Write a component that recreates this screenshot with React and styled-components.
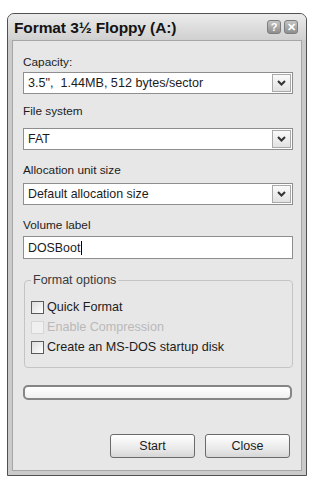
import React from 'react'
import styled, { createGlobalStyle } from 'styled-components'

const GlobalStyle = createGlobalStyle`
  html, body {
    margin: 0;
    padding: 0;
    background: #ffffff;
    font-family: "Liberation Sans", Arial, sans-serif;
    color: #1c1c1c;
  }
`

const Window = styled.div`
  box-sizing: border-box;
  width: 300px;
  margin: 13px 0 0 7px;
  border: 1px solid #505050;
  border-radius: 7px 7px 0 0;
  background: #cacaca;
  overflow: hidden;
`

const TitleBar = styled.div`
  height: 26px;
  display: flex;
  align-items: center;
  padding: 0 8px 0 6px;
  background: linear-gradient(#ebebeb, #d0d0d0);
`

const Title = styled.div`
  flex: 1;
  font-size: 15.5px;
  font-weight: bold;
  color: #141414;
  letter-spacing: -0.1px;
  padding-top: 1px;
`

const CaptionButtons = styled.div`
  display: flex;
  gap: 3px;
`

const CaptionButton = styled.div`
  width: 14px;
  height: 14px;
  box-sizing: border-box;
  border: 1px solid #7d7d7d;
  border-radius: 3px;
  background: linear-gradient(#c4c4c4, #8e8e8e);
  color: #ffffff;
  font-size: 11px;
  font-weight: bold;
  line-height: 12px;
  text-align: center;
`

const Client = styled.div`
  margin: 0 4px 4px 4px;
  border: 1px solid #a6a6a6;
  background: #e7e7e7;
  padding: 14px 8px 12px 10px;
  display: flex;
  flex-direction: column;
`

const Label = styled.div`
  font-size: 11.8px;
  line-height: 15px;
  height: 15px;
  margin-top: ${p => p.$top || 0}px;
`

const Combo = styled.div`
  box-sizing: border-box;
  height: 22px;
  margin-top: ${p => p.$top || 0}px;
  border: 1px solid #8e8e8e;
  background: #ffffff;
  display: flex;
  align-items: center;
  padding: 1px;
`

const ComboText = styled.div`
  flex: 1;
  padding-left: 3px;
  font-size: ${p => p.$size || 12.4}px;
  white-space: pre;
`

const ArrowButton = styled.div`
  box-sizing: border-box;
  width: 19px;
  height: 18px;
  border: 1px solid #a9a9a9;
  background: linear-gradient(#fafafa, #e2e2e2);
  display: flex;
  align-items: center;
  justify-content: center;
`

const TextInput = styled.div`
  box-sizing: border-box;
  height: 23px;
  margin-top: 3px;
  border: 1px solid #8e8e8e;
  background: #ffffff;
  display: flex;
  align-items: center;
  padding-left: 4px;
  font-size: 12.4px;
`

const Caret = styled.span`
  display: inline-block;
  width: 0;
  height: 14px;
  border-left: 1px solid #000;
  margin-left: 1px;
`

const Group = styled.fieldset`
  margin: 14px 0 0 1px;
  padding: 9px 6px 10px 6px;
  border: 1px solid #c4c4c4;
  border-radius: 4px;
  min-width: 0;
`

const Legend = styled.legend`
  padding: 0 2px;
  font-size: 12.5px;
  line-height: 15px;
  color: #3a3a3a;
`

const CheckRow = styled.div`
  height: 20px;
  display: flex;
  align-items: center;
  gap: 3px;
  font-size: 12.6px;
  color: ${p => (p.$disabled ? '#b9b9b9' : '#1c1c1c')};
`

const Box = styled.span`
  box-sizing: border-box;
  width: 13px;
  height: 13px;
  border: 1px solid ${p => (p.$disabled ? '#d6d6d6' : '#5a5a5a')};
  background: ${p => (p.$disabled ? '#f0f0f0' : 'linear-gradient(135deg, #dcdcdc, #ffffff)')};
`

const Progress = styled.div`
  box-sizing: border-box;
  height: 15px;
  margin: 17px 1px 0 0;
  border: 2px solid #858585;
  border-radius: 5px;
  background: linear-gradient(#ffffff, #f0f0f0);
`

const ButtonRow = styled.div`
  display: flex;
  justify-content: flex-end;
  gap: 10px;
  margin-top: 34px;
  padding-right: 3px;
`

const Button = styled.div`
  box-sizing: border-box;
  width: 85px;
  height: 24px;
  border: 1px solid #6a6a6a;
  border-radius: 3px;
  background: linear-gradient(#ffffff, #e6e6e6 70%, #d6d6d6);
  display: flex;
  align-items: center;
  justify-content: center;
  font-size: 12.5px;
`

const Chevron = () => (
  <svg width="9" height="6" viewBox="0 0 9 6">
    <polyline points="1,1 4.5,4.5 8,1" fill="none" stroke="#333" strokeWidth="2" />
  </svg>
)

const Select = ({ top, size, children }) => (
  <Combo $top={top}>
    <ComboText $size={size}>{children}</ComboText>
    <ArrowButton>
      <Chevron />
    </ArrowButton>
  </Combo>
)

const options = [
  { text: 'Quick Format' },
  { text: 'Enable Compression', disabled: true },
  { text: 'Create an MS-DOS startup disk' },
]

export default function App() {
  return (
    <>
      <GlobalStyle />
      <Window>
        <TitleBar>
          <Title>Format 3½ Floppy (A:)</Title>
          <CaptionButtons>
            <CaptionButton>?</CaptionButton>
            <CaptionButton>✕</CaptionButton>
          </CaptionButtons>
        </TitleBar>
        <Client>
          <Label>Capacity:</Label>
          <Select top={2} size={12.6}>3.5",  1.44MB, 512 bytes/sector</Select>
          <Label $top={10}>File system</Label>
          <Select top={9}>FAT</Select>
          <Label $top={13}>Allocation unit size</Label>
          <Select top={5}>Default allocation size</Select>
          <Label $top={13}>Volume label</Label>
          <TextInput>
            DOSBoot<Caret />
          </TextInput>
          <Group>
            <Legend>Format options</Legend>
            {options.map(o => (
              <CheckRow key={o.text} $disabled={o.disabled}>
                <Box $disabled={o.disabled} />
                {o.text}
              </CheckRow>
            ))}
          </Group>
          <Progress />
          <ButtonRow>
            <Button>Start</Button>
            <Button>Close</Button>
          </ButtonRow>
        </Client>
      </Window>
    </>
  )
}
